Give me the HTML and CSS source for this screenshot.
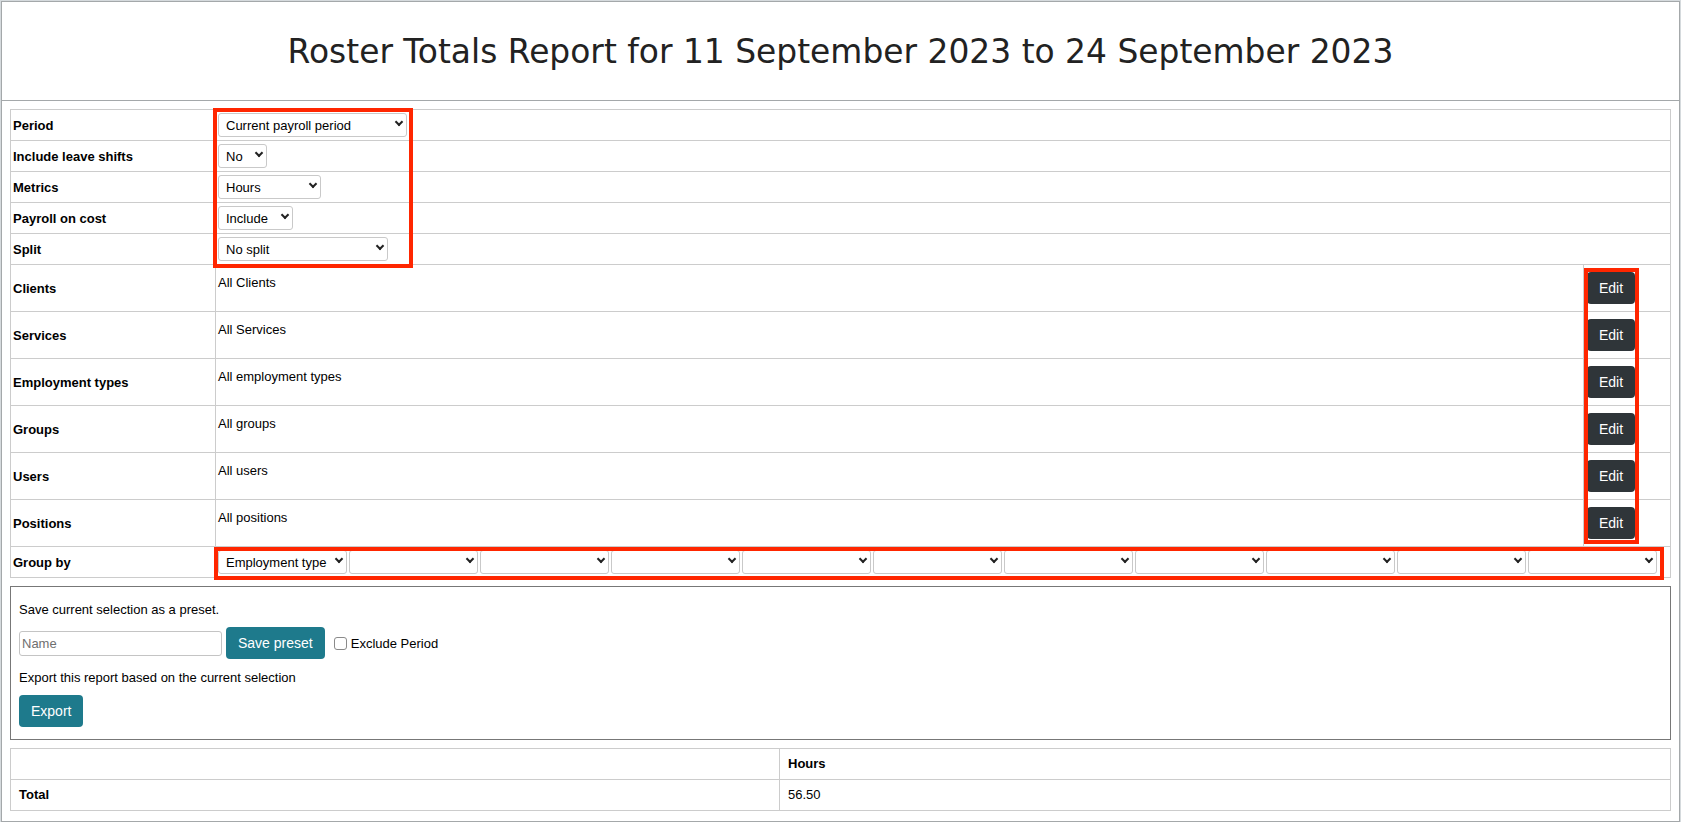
FILE: index.html
```html
<!DOCTYPE html>
<html lang="en">
<head>
    <meta charset="UTF-8">
    <meta name="viewport" content="width=device-width, initial-scale=1.0">
    <title>Roster Totals Report</title>
    <link rel="stylesheet" href="styles.css">
</head>
<body>
    <div class="page">
        <header class="report-header">
            <h1>Roster Totals Report for 11 September 2023 to 24 September 2023</h1>
        </header>

        <div class="report-body">
            <table class="filters">
                <tr>
                    <th class="label">Period</th>
                    <td colspan="2">
                        <span class="sel-wrap"><select class="sel sel-period"><option>Current payroll period</option></select></span>
                    </td>
                </tr>
                <tr>
                    <th class="label">Include leave shifts</th>
                    <td colspan="2">
                        <span class="sel-wrap"><select class="sel sel-leave"><option>No</option><option>Yes</option></select></span>
                    </td>
                </tr>
                <tr>
                    <th class="label">Metrics</th>
                    <td colspan="2">
                        <span class="sel-wrap"><select class="sel sel-metrics"><option>Hours</option></select></span>
                    </td>
                </tr>
                <tr>
                    <th class="label">Payroll on cost</th>
                    <td colspan="2">
                        <span class="sel-wrap"><select class="sel sel-oncost"><option>Include</option></select></span>
                    </td>
                </tr>
                <tr>
                    <th class="label">Split</th>
                    <td colspan="2">
                        <span class="sel-wrap"><select class="sel sel-split"><option>No split</option></select></span>
                    </td>
                </tr>
                <tr class="tall">
                    <th class="label">Clients</th>
                    <td class="value">All Clients</td>
                    <td class="action"><button class="btn btn-dark">Edit</button></td>
                </tr>
                <tr class="tall">
                    <th class="label">Services</th>
                    <td class="value">All Services</td>
                    <td class="action"><button class="btn btn-dark">Edit</button></td>
                </tr>
                <tr class="tall">
                    <th class="label">Employment types</th>
                    <td class="value">All employment types</td>
                    <td class="action"><button class="btn btn-dark">Edit</button></td>
                </tr>
                <tr class="tall">
                    <th class="label">Groups</th>
                    <td class="value">All groups</td>
                    <td class="action"><button class="btn btn-dark">Edit</button></td>
                </tr>
                <tr class="tall">
                    <th class="label">Users</th>
                    <td class="value">All users</td>
                    <td class="action"><button class="btn btn-dark">Edit</button></td>
                </tr>
                <tr class="tall">
                    <th class="label">Positions</th>
                    <td class="value">All positions</td>
                    <td class="action"><button class="btn btn-dark">Edit</button></td>
                </tr>
                <tr>
                    <th class="label">Group by</th>
                    <td colspan="2">
                        <div class="group-by">
                            <span class="sel-wrap"><select class="sel sel-group"><option>Employment type</option></select></span>
                            <span class="sel-wrap"><select class="sel sel-group"><option></option></select></span>
                            <span class="sel-wrap"><select class="sel sel-group"><option></option></select></span>
                            <span class="sel-wrap"><select class="sel sel-group"><option></option></select></span>
                            <span class="sel-wrap"><select class="sel sel-group"><option></option></select></span>
                            <span class="sel-wrap"><select class="sel sel-group"><option></option></select></span>
                            <span class="sel-wrap"><select class="sel sel-group"><option></option></select></span>
                            <span class="sel-wrap"><select class="sel sel-group"><option></option></select></span>
                            <span class="sel-wrap"><select class="sel sel-group"><option></option></select></span>
                            <span class="sel-wrap"><select class="sel sel-group"><option></option></select></span>
                            <span class="sel-wrap"><select class="sel sel-group"><option></option></select></span>
                        </div>
                    </td>
                </tr>
            </table>

            <div class="preset-box">
                <p>Save current selection as a preset.</p>
                <div class="preset-row">
                    <input type="text" class="preset-name" placeholder="Name">
                    <button class="btn btn-teal">Save preset</button>
                    <label class="check"><input type="checkbox"> Exclude Period</label>
                </div>
                <p>Export this report based on the current selection</p>
                <button class="btn btn-teal">Export</button>
            </div>

            <table class="totals">
                <tr>
                    <th class="first"></th>
                    <th>Hours</th>
                </tr>
                <tr>
                    <th class="first">Total</th>
                    <td>56.50</td>
                </tr>
            </table>
        </div>

        <!-- highlight boxes drawn over the form -->
        <div class="mark mark-selects"></div>
        <div class="mark mark-edit"></div>
        <div class="mark mark-group"></div>
    </div>
</body>
</html>
```

FILE: styles.css
```css
/* Reset */
* {
    box-sizing: border-box;
}

body {
    margin: 0;
    background: #d5dadd;
    font-family: 'Liberation Sans', Arial, sans-serif;
    font-size: 13px;
    color: #000;
}

/* Page frame */
.page {
    position: relative;
    margin: 1px 1px 0 1px;
    height: 821px;
    background: #fff;
    border: 1px solid #a4a8aa;
    overflow: hidden;
}

/* Title bar */
.report-header {
    height: 99px;
    border-bottom: 1px solid #a4a8aa;
    display: flex;
    align-items: center;
    justify-content: center;
}

.report-header h1 {
    margin: 0;
    font-family: 'DejaVu Sans', sans-serif;
    font-weight: 400;
    font-size: 32.9px;
    color: #222;
}

.report-body {
    padding: 8px;
}

/* Filter table */
.filters {
    width: 100%;
    border-collapse: collapse;
}

.filters th,
.filters td {
    border: 1px solid #cccccc;
    padding: 3px 2px;
    line-height: 15px;
}

.filters th.label {
    width: 205px;
    text-align: left;
    vertical-align: middle;
    font-weight: bold;
}

.filters .tall td {
    padding: 10px 2px 7px;
    vertical-align: top;
}

.filters .tall td.action {
    width: 87px;
    padding: 7px 3px;
}

/* Selects */
.sel-wrap {
    position: relative;
    display: inline-block;
    vertical-align: top;
}

.sel-wrap::after {
    content: "";
    position: absolute;
    right: 5px;
    top: calc(50% - 5.6px);
    width: 4px;
    height: 4px;
    border-right: 2px solid #222;
    border-bottom: 2px solid #222;
    transform: rotate(45deg);
    pointer-events: none;
}

.sel {
    appearance: none;
    -webkit-appearance: none;
    display: block;
    height: 24px;
    margin: 0;
    padding: 0 18px 0 7px;
    border: 1px solid #c9c9c9;
    border-radius: 3px;
    background: #fff;
    font-family: 'Liberation Sans', Arial, sans-serif;
    font-size: 13px;
    color: #000;
}

.sel-period { width: 189px; }
.sel-leave { width: 49px; }
.sel-metrics { width: 103px; }
.sel-oncost { width: 75px; }
.sel-split { width: 170px; }
.sel-group { width: 129px; }

.group-by {
    display: flex;
    gap: 2px;
}

/* Buttons */
.btn {
    display: inline-block;
    padding: 6px 12px;
    border: none;
    border-radius: 4px;
    font-family: 'Liberation Sans', Arial, sans-serif;
    font-size: 14px;
    line-height: 20px;
    color: #fff;
    cursor: pointer;
}

.btn-dark {
    background-color: #2f3539;
}

.btn-teal {
    background-color: #1e7a8c;
}

/* Preset / export box */
.preset-box {
    margin-top: 8px;
    padding: 15px 8px 12px;
    border: 1px solid #777;
}

.preset-box p {
    margin: 0 0 10px;
    line-height: 15px;
}

.preset-row {
    display: flex;
    align-items: center;
    margin-bottom: 11px;
}

.preset-name {
    width: 203px;
    height: 25px;
    padding: 0 2px;
    border: 1px solid #c4c4c4;
    border-radius: 3px;
    font-family: 'Liberation Sans', Arial, sans-serif;
    font-size: 13px;
    margin-right: 4px;
}

.preset-name::placeholder {
    color: #6f6f6f;
}

.check {
    display: flex;
    align-items: center;
    margin-left: 9px;
}

.check input {
    appearance: none;
    -webkit-appearance: none;
    width: 13px;
    height: 13px;
    margin: 0 4px 0 0;
    border: 1px solid #8a8a8a;
    border-radius: 3px;
    background: #fff;
}

/* Totals table */
.totals {
    width: 100%;
    margin-top: 8px;
    border-collapse: collapse;
}

.totals th,
.totals td {
    border: 1px solid #cccccc;
    padding: 7px 8px;
    line-height: 16px;
    text-align: left;
}

.totals th.first {
    width: 769px;
}

/* Red highlight boxes */
.mark {
    position: absolute;
    border: 4px solid #ff2600;
    pointer-events: none;
}

.mark-selects {
    left: 211px;
    top: 106px;
    width: 200px;
    height: 160px;
}

.mark-edit {
    left: 1582px;
    top: 266px;
    width: 55px;
    height: 276px;
}

.mark-group {
    left: 212px;
    top: 545px;
    width: 1450px;
    height: 33px;
}
```
